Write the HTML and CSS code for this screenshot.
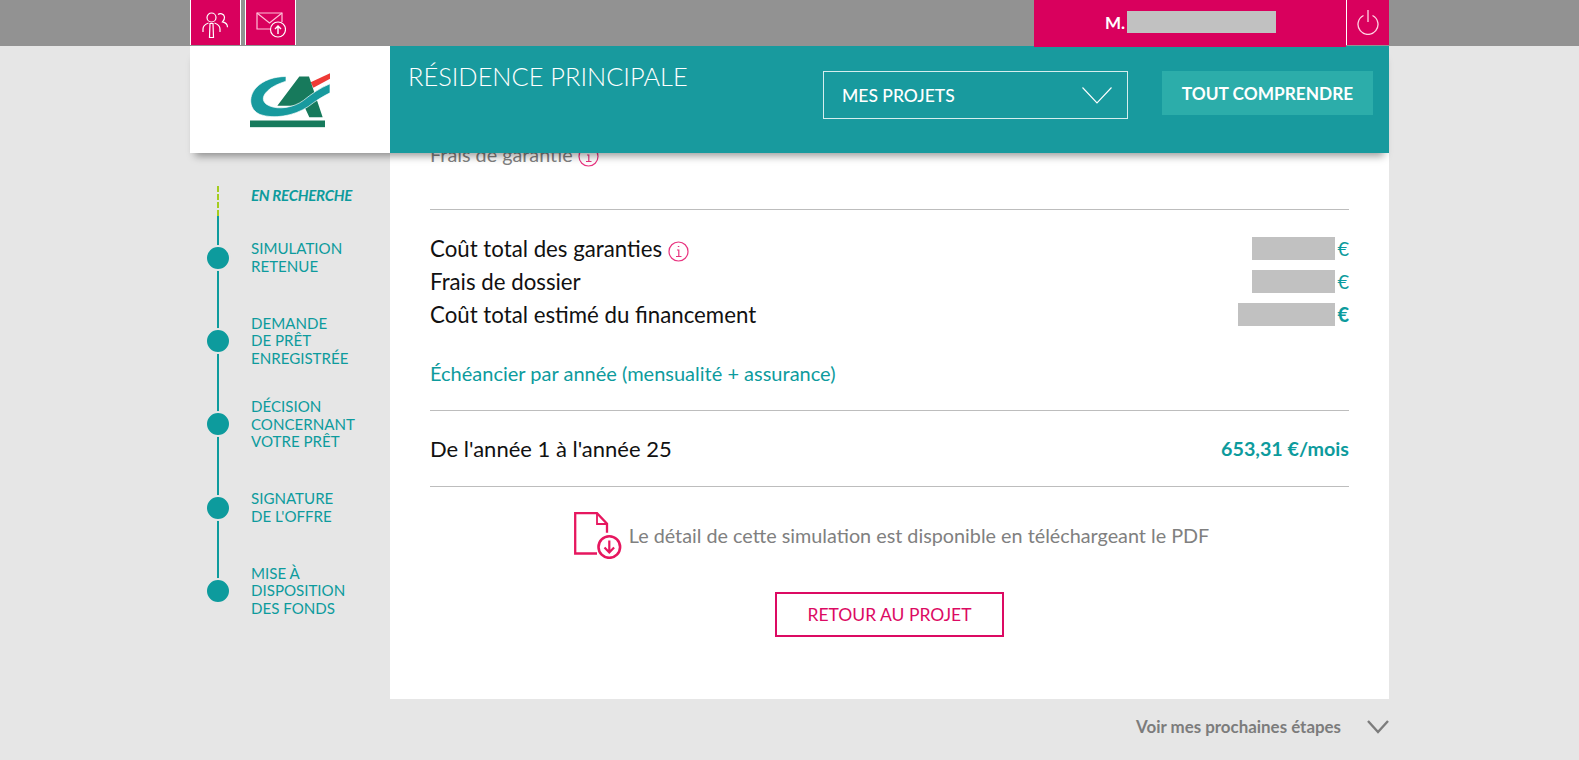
FILE: index.html
```html
<!DOCTYPE html>
<html lang="fr">
<head>
<meta charset="utf-8">
<title>Résidence principale</title>
<link rel="stylesheet" href="styles.css">
</head>
<body>
<div class="topband">
  <div class="wrap topbar">
    <a class="topbtn"><svg width="27" height="27" viewBox="0 0 27 27" fill="none" stroke="#fff" stroke-width="1.200"><circle cx="9.500" cy="5.500" r="4.500"/><path d="M1 20v-3c0-3 2.500-5 5.500-6M12.500 11c3 1 5.500 3 5.500 6v3"/><path d="M8 11.500l-.5 14h4l-.5-14z"/><path d="M16 2.500c2-1.500 6-1 6.500 2.500.2 2-.7 3.500-2 4.800 2.500.5 5 2.500 5 5.500"/></svg></a>
    <a class="topbtn"><svg width="30" height="26" viewBox="0 0 30 26" fill="none" stroke="#fff" stroke-width="1.200"><path d="M15 17H1V1h25v9" stroke="#ffc0d8"/><path d="M1 1l12.500 10L26 1" stroke="#ffc0d8"/><circle cx="22" cy="17.500" r="7.500"/><path d="M22 22v-8M19 17l3-3 3 3" stroke-width="1.400"/></svg></a>
    <div class="user"><span class="user-name">M.</span><span class="mask mask-user"></span></div>
    <a class="logout"><svg width="24" height="26" viewBox="0 0 24 26" fill="none" stroke="#ffd4e4" stroke-width="1.300"><path d="M7.500 6.500a10 10 0 1 0 9 0"/><path d="M12 1v12"/></svg></a>
  </div>
</div>
<div class="wrap head">
  <div class="logo">
    <svg width="80" height="57" viewBox="210 215 240 170">
      <path d="M392 245L450 218V235L400 262Z" fill="#ee3a36"/>
      <path d="M358 228H387L428 350H388L372 316H292Z" fill="#177a5c"/>
      <path d="M450 250C420 262 395 280 370 300C340 322 295 328 268 316C245 306 245 288 262 272C275 258 295 250 318 242V228C285 228 250 238 228 262C203 290 208 328 240 342C280 356 340 348 385 318C405 302 430 287 450 277Z" fill="#189a9e" stroke="#fff" stroke-width="2"/>
      <rect x="210" y="360" width="225" height="20" fill="#177a5c"/>
    </svg>
  </div>
  <div class="head-main">
    <h1 class="title">RÉSIDENCE PRINCIPALE</h1>
    <div class="select"><span>MES PROJETS</span>
      <svg width="30" height="17" viewBox="0 0 30 17" fill="none" stroke="#fff" stroke-width="1.100"><path d="M.5.500L15 16 29.500.500"/></svg>
    </div>
    <a class="cta">TOUT COMPRENDRE</a>
  </div>
</div>
<div class="wrap content">
  <aside class="side">
    <div class="step step-first">EN RECHERCHE</div>
    <div class="step"><span class="dot"></span><span>SIMULATION<br>RETENUE</span></div>
    <div class="step"><span class="dot"></span><span>DEMANDE<br>DE PRÊT<br>ENREGISTRÉE</span></div>
    <div class="step"><span class="dot"></span><span>DÉCISION<br>CONCERNANT<br>VOTRE PRÊT</span></div>
    <div class="step"><span class="dot"></span><span>SIGNATURE<br>DE L'OFFRE</span></div>
    <div class="step step-last"><span class="dot"></span><span>MISE À<br>DISPOSITION<br>DES FONDS</span></div>
  </aside>
  <main class="panel">
    <div class="cut">Frais de garantie <svg class="info" width="21" height="21" viewBox="0 0 21 21" fill="none" stroke="#e8337f" stroke-width="1.200"><circle cx="10.500" cy="10.500" r="9.500"/><path d="M9 9h1.800v6.500M8 15.500h5.500M9.800 5.500h1.500"/></svg></div>
    <hr class="rule rule-a">
    <div class="row"><span>Coût total des garanties <svg class="info" width="21" height="21" viewBox="0 0 21 21" fill="none" stroke="#e8337f" stroke-width="1.200"><circle cx="10.500" cy="10.500" r="9.500"/><path d="M9 9h1.800v6.500M8 15.500h5.500M9.800 5.500h1.500"/></svg></span><span class="amt"><span class="mask mask-a"></span>€</span></div>
    <div class="row"><span>Frais de dossier</span><span class="amt"><span class="mask mask-a"></span>€</span></div>
    <div class="row"><span>Coût total estimé du financement</span><span class="amt amt-b"><span class="mask mask-b"></span>€</span></div>
    <a class="link">Échéancier par année (mensualité + assurance)</a>
    <hr class="rule rule-b">
    <div class="row row-year"><span>De l'année 1 à l'année 25</span><strong class="month">653,31 €/mois</strong></div>
    <hr class="rule rule-c">
    <div class="pdf">
      <svg width="48" height="47" viewBox="0 0 48 47" fill="none" stroke="#e6175f" stroke-width="2.300"><path d="M23 41.500H1.200V1.200h21.800l10 10.500v9"/><path d="M23 2v10h10" stroke-width="1.800"/><circle cx="35.300" cy="35" r="10.800" stroke-width="2.600"/><path d="M35.300 28.500v12M30.500 35.500l4.800 5 4.800-5" stroke-width="2.200"/></svg>
      <span>Le détail de cette simulation est disponible en téléchargeant le PDF</span>
    </div>
    <div class="actions"><a class="back">RETOUR AU PROJET</a></div>
  </main>
</div>
<div class="wrap next">
  <span>Voir mes prochaines étapes</span>
  <svg width="22" height="14" viewBox="0 0 22 14" fill="none" stroke="#7c7c7c" stroke-width="2.400"><path d="M1 1l10 11L21 1"/></svg>
</div>
</body>
</html>
```
FILE: styles.css
```css
* { box-sizing: border-box; }
html, body { margin: 0; height: 760px; overflow: hidden; }
body { background: #e6e6e6; font-family: Lato, "Open Sans", sans-serif; color: #111; }
.wrap { width: 1199px; margin: 0 auto; }
.topband { background: #929292; height: 46px; }
.topbar { display: flex; height: 46px; }
.topbtn { width: 51px; height: 45px; margin-right: 4px; background: #d9005d; border: solid #fff; border-width: 0 1px; display: flex; align-items: center; justify-content: center; padding-top: 5px; }
.user { margin-left: auto; width: 312px; height: 47px; background: #d9005d; display: flex; align-items: center; padding: 0 0 3px 71px; color: #fff; font-weight: 700; font-size: 17px; position: relative; z-index: 3; }
.user-name { margin-right: 2px; }
.mask { display: inline-block; background: #c1c1c1; }
.mask-user { width: 149px; height: 22px; }
.logout { width: 43px; height: 45px; background: #d9005d; border-left: 1px solid #fff; display: flex; align-items: center; justify-content: center; padding-bottom: 2px; position: relative; z-index: 3; }
.head { display: flex; height: 107px; position: relative; z-index: 2; box-shadow: 0 8px 8px -5px rgba(0,0,0,.4); }
.logo { width: 200px; background: #fff; padding: 26px 0 0 60px; }
.head-main { flex: 1; background: #189a9e; display: flex; align-items: flex-start; color: #fff; position: relative; }
.title { margin: 14px 0 0 18px; width: 415px; font-size: 25.400px; font-weight: 300; line-height: 32px; }
.select { width: 305px; height: 48px; margin-top: 25px; border: 1px solid #d5eeee; display: flex; align-items: center; justify-content: space-between; padding: 0 15px 0 18px; font-size: 17.500px; font-weight: 500; }
.cta { margin: 25px 0 0 34px; width: 211px; height: 44px; background: #2cadaa; display: flex; align-items: center; justify-content: center; font-size: 17.300px; font-weight: 700; white-space: nowrap; }
.content { display: flex; height: 546px; }
.side { width: 200px; padding: 33px 0 0 0; color: #0d9b9d; font-size: 15.100px; line-height: 17.600px; position: relative; }
.side::before { content: ""; position: absolute; left: 27px; top: 62px; height: 376px; border-left: 2px solid #0d9b9d; }
.step { display: flex; align-items: center; height: 83.400px; position: relative; padding-left: 61px; }
.step-first { height: 30px; align-items: flex-start; font-weight: 700; font-style: italic; font-size: 15.100px; letter-spacing: -.3px; padding-top: 1px; }
.step-first::before { content: ""; position: absolute; left: 27px; top: 0; height: 30px; border-left: 2px dashed #a4cc1f; }
.dot { position: absolute; left: 14.500px; top: 50%; margin-top: -13px; width: 26px; height: 26px; border-radius: 50%; background: #0d9b9d; border: 2px solid #e6e6e6; }
.panel { flex: 1; background: #fff; padding: 0 40px; font-size: 22.250px; line-height: 33px; }
.cut { margin-top: -15px; color: #808080; font-size: 19.800px; line-height: 33px; height: 33px; }
.info { vertical-align: -5px; }
.rule { border: 0; border-top: 1px solid #bdbdbd; margin: 0; }
.rule-a { margin-top: 38px; margin-bottom: 22px; }
.row { display: flex; justify-content: space-between; align-items: center; height: 33px; }
.row-year { font-size: 22px; }
.amt { display: flex; align-items: center; color: #0d9b9d; font-size: 20px; }
.amt-b { font-weight: 700; }
.mask-a { width: 83px; height: 23px; margin-right: 2px; }
.mask-b { width: 97px; height: 23px; margin-right: 2px; }
.link { display: block; margin-top: 26px; color: #0d9b9d; font-size: 20px; line-height: 33px; }
.rule-b { margin-top: 20px; margin-bottom: 21px; }
.month { color: #0d9b9d; font-size: 19.700px; font-weight: 700; }
.rule-c { margin-top: 21px; }
.pdf { display: flex; align-items: center; justify-content: center; gap: 7px; margin-top: 23px; height: 50px; color: #808080; font-size: 19.800px; padding-left: 4px; }
.actions { display: flex; justify-content: center; margin-top: 32px; }
.back { width: 229px; height: 45px; border: 2px solid #dc0a63; color: #dc0a63; display: flex; align-items: center; justify-content: center; font-size: 17.500px; }
.next { display: flex; justify-content: flex-end; align-items: center; gap: 26px; height: 46px; color: #7c7c7c; font-size: 16.900px; font-weight: 700; padding-top: 9px; }
```
